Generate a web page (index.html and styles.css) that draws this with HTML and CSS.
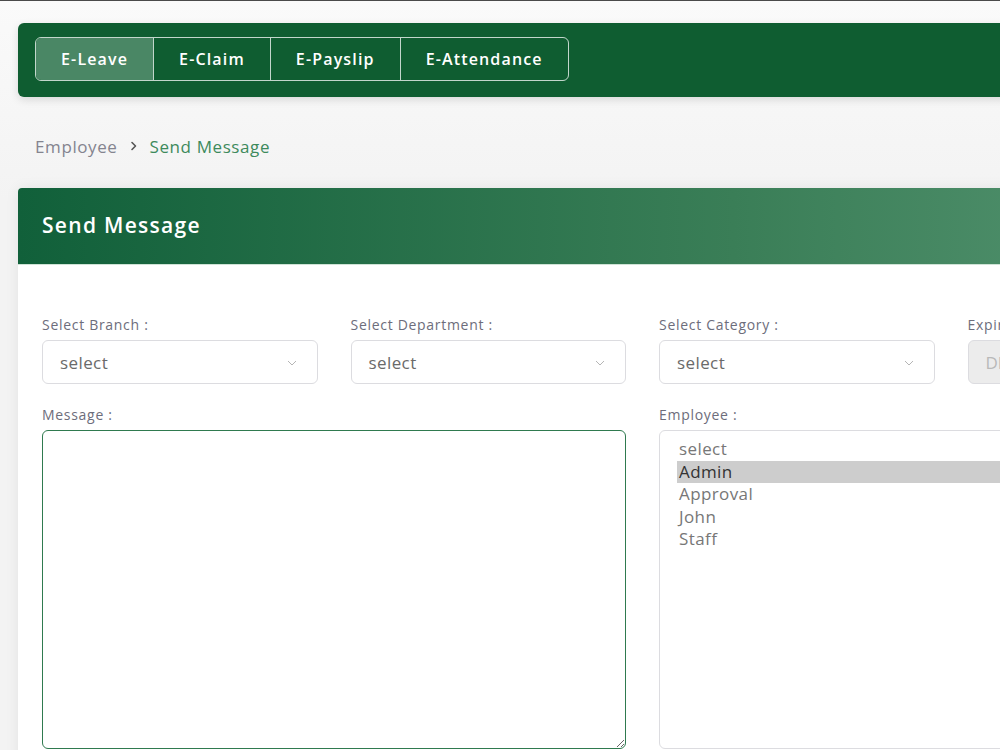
FILE: index.html
```html
<!DOCTYPE html>
<html lang="en">
<head>
<meta charset="utf-8">
<title>Send Message</title>
<link rel="stylesheet" href="styles.css">
</head>
<body>
<div class="page">
  <nav class="module-bar">
    <div class="module-tabs">
      <a class="module-tab active">E-Leave</a>
      <a class="module-tab">E-Claim</a>
      <a class="module-tab">E-Payslip</a>
      <a class="module-tab">E-Attendance</a>
    </div>
  </nav>

  <div class="breadcrumb">
    <span class="crumb">Employee</span>
    <svg class="crumb-sep" width="8" height="10" viewBox="0 0 8 10"><path d="M2 1.5 L5.5 5 L2 8.5" fill="none" stroke="#555" stroke-width="1.6" stroke-linecap="round" stroke-linejoin="round"/></svg>
    <span class="crumb current">Send Message</span>
  </div>

  <section class="card">
    <header class="card-header">
      <h1 class="card-title">Send Message</h1>
    </header>
    <div class="card-body">
      <form class="form-grid">
        <div class="field">
          <label class="field-label">Select Branch :</label>
          <div class="select-box">
            <span class="select-value">select</span>
            <svg class="chevron" width="10" height="6" viewBox="0 0 10 6"><path d="M1 1 L5 5 L9 1" fill="none" stroke="#b5b5b5" stroke-width="1"/></svg>
          </div>
        </div>
        <div class="field">
          <label class="field-label">Select Department :</label>
          <div class="select-box">
            <span class="select-value">select</span>
            <svg class="chevron" width="10" height="6" viewBox="0 0 10 6"><path d="M1 1 L5 5 L9 1" fill="none" stroke="#b5b5b5" stroke-width="1"/></svg>
          </div>
        </div>
        <div class="field">
          <label class="field-label">Select Category :</label>
          <div class="select-box">
            <span class="select-value">select</span>
            <svg class="chevron" width="10" height="6" viewBox="0 0 10 6"><path d="M1 1 L5 5 L9 1" fill="none" stroke="#b5b5b5" stroke-width="1"/></svg>
          </div>
        </div>
        <div class="field">
          <label class="field-label">Expiry Date :</label>
          <input class="date-input" type="text" placeholder="DD/MM/YYYY" disabled>
        </div>

        <div class="field span-2">
          <label class="field-label">Message :</label>
          <textarea class="message-input"></textarea>
        </div>
        <div class="field span-2">
          <label class="field-label">Employee :</label>
          <div class="listbox">
            <div class="list-option">select</div>
            <div class="list-option selected">Admin</div>
            <div class="list-option">Approval</div>
            <div class="list-option">John</div>
            <div class="list-option">Staff</div>
          </div>
        </div>
      </form>
    </div>
  </section>
</div>
</body>
</html>
```

FILE: styles.css
```css
html, body {
  margin: 0;
  padding: 0;
  overflow: hidden;
  height: 100%;
}

body {
  font-family: "Open Sans", "Noto Sans", sans-serif;
  background: linear-gradient(#fafafa, #f3f3f3 200px);
  border-top: 1px solid #4a4a4a;
  box-sizing: border-box;
}

.page {
  width: 1300px;
  padding: 22px 0 0 18px;
}

/* top module bar */
.module-bar {
  background: #0f5d31;
  border-radius: 6px;
  padding: 14px 17px 16px;
  box-shadow: 0 3px 8px rgba(0, 0, 0, 0.12);
  display: flex;
}

.module-tabs {
  display: flex;
  height: 44px;
  border: 1px solid rgba(255, 255, 255, 0.75);
  border-radius: 6px;
  overflow: hidden;
  box-sizing: border-box;
}

.module-tab {
  display: flex;
  align-items: center;
  padding: 0 25px;
  color: #fff;
  font-size: 16px;
  font-weight: 600;
  letter-spacing: 1.15px;
  border-left: 1px solid rgba(255, 255, 255, 0.75);
}

.module-tab:first-child {
  border-left: none;
}

.module-tab.active {
  background: #4a8765;
}

/* breadcrumb */
.breadcrumb {
  display: flex;
  align-items: center;
  gap: 12px;
  padding-left: 17px;
  margin: 37px 0 30px;
  height: 24px;
  font-size: 17px;
  letter-spacing: 0.6px;
}

.crumb {
  color: #84848f;
}

.crumb.current {
  color: #3d8a5c;
}

/* card */
.card {
  background: #fff;
  border-radius: 4px 4px 0 0;
  box-shadow: 0 0 14px rgba(0, 0, 0, 0.07);
  height: 700px;
}

.card-header {
  height: 77px;
  padding: 0 24px;
  display: flex;
  align-items: center;
  background: linear-gradient(90deg, #11603a 0%, #3a7e57 55%, #5c9a78 100%);
  border-radius: 4px 4px 0 0;
  border-bottom: 1px solid #cfe3d6;
  box-sizing: border-box;
}

.card-title {
  margin: 0 0 2px;
  color: #fff;
  font-size: 21px;
  font-weight: 600;
  letter-spacing: 1.3px;
}

.card-body {
  padding: 50px 24px 0;
}

.form-grid {
  display: grid;
  grid-template-columns: repeat(4, 275.5px);
  column-gap: 33px;
  row-gap: 21px;
}

.field {
  display: flex;
  flex-direction: column;
}

.span-2 {
  grid-column: span 2;
}

.field-label {
  color: #6d6d7b;
  font-size: 14px;
  line-height: 20px;
  margin-bottom: 5px;
  letter-spacing: 0.7px;
}

.select-box {
  height: 44px;
  box-sizing: border-box;
  border: 1px solid #dcdce0;
  border-radius: 6px;
  display: flex;
  align-items: center;
  justify-content: space-between;
  padding: 0 20px 0 17px;
  background: #fff;
}

.select-value {
  color: #6a6a6a;
  font-size: 17px;
  letter-spacing: 0.4px;
}

.chevron {
  margin-top: 2px;
}

.date-input {
  height: 44px;
  box-sizing: border-box;
  border: 1px solid #dcdce0;
  border-radius: 6px;
  background: #ececec;
  padding: 0 17px;
  font-family: inherit;
  font-size: 17px;
}

.date-input::placeholder {
  color: #b9b9b9;
}

.message-input {
  height: 319px;
  box-sizing: border-box;
  border: 1px solid #2f7a4f;
  border-radius: 6px;
  outline: none;
  resize: vertical;
  font-family: inherit;
  padding: 10px 16px;
}

.listbox {
  height: 319px;
  box-sizing: border-box;
  border: 1px solid #dcdce0;
  border-radius: 6px;
  padding: 7px 17px;
}

.list-option {
  color: #777;
  font-size: 17px;
  line-height: 22.5px;
  padding: 0 2px;
  letter-spacing: 0.4px;
}

.list-option.selected {
  background: #cdcdcd;
  color: #333;
}
```
